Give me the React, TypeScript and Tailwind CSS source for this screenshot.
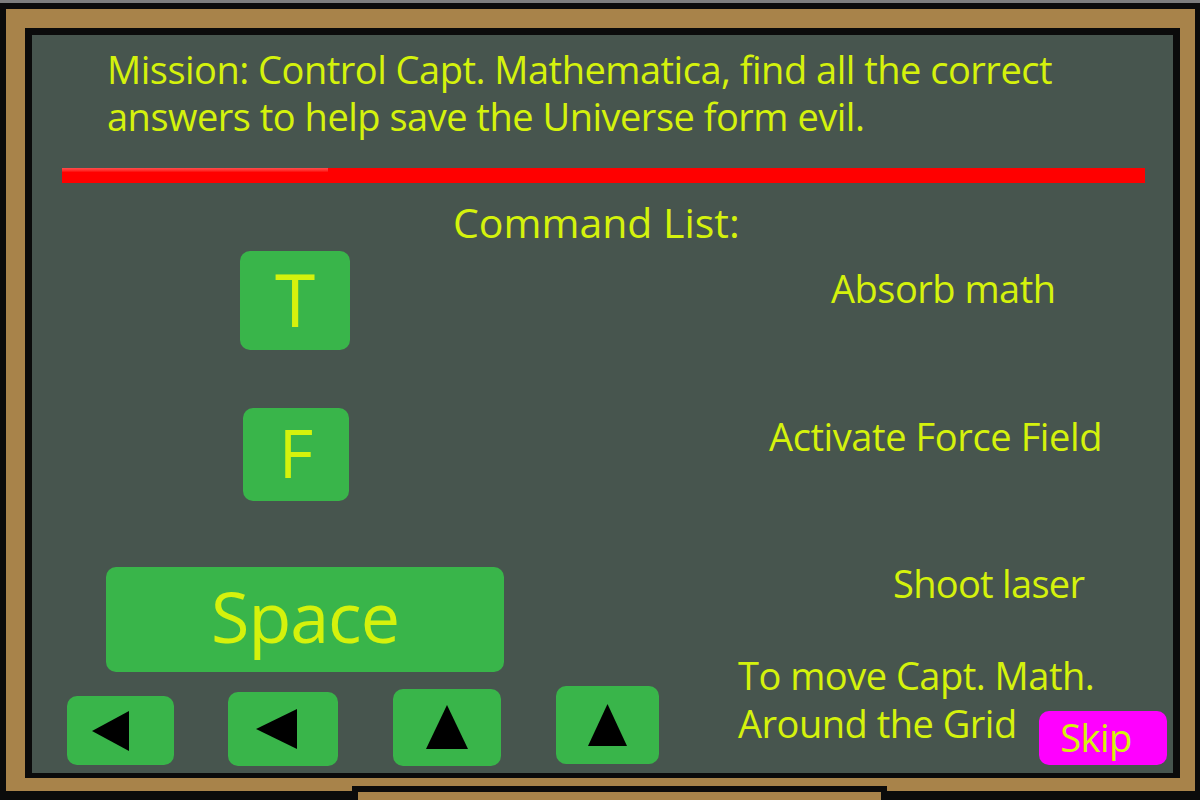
import React from "react";

const Left = ({ w, h }: { w: number; h: number }) => (
  <svg width={w} height={h} viewBox={`0 0 ${w} ${h}`}><polygon points={`0,${h / 2} ${w},0 ${w},${h}`} fill="#000" /></svg>
);
const Up = ({ w, h }: { w: number; h: number }) => (
  <svg width={w} height={h} viewBox={`0 0 ${w} ${h}`}><polygon points={`${w / 2},0 ${w},${h} 0,${h}`} fill="#000" /></svg>
);

export default function App() {
  return (
    <div className="relative w-[1200px] h-[800px] overflow-hidden bg-[#0b0b0b] font-['Open_Sans',sans-serif] text-[#d5f20c]">
      <div className="h-[3px] bg-[#7d7d7d]" />
      <div className="ml-[6px] mr-[5px] mt-[6px] h-[782px] bg-[#a8834a] pt-[19px] pl-[19px] pr-[15px] pb-[13px]">
        <div className="h-full bg-[#0b0b0b] pt-[7px] pl-[7px] pr-[7px] pb-[5px]">
          <div className="h-full bg-[#47554e] flex flex-col">
            {/* mission */}
            <div className="ml-[75px] mt-[11px] text-[38px] leading-[47px] tracking-[-0.5px] whitespace-nowrap">
              <div>Mission: Control Capt. Mathematica, find all the correct</div>
              <div>answers to help save the Universe form evil.</div>
            </div>
            {/* red bar */}
            <div className="ml-[30px] mr-[28px] mt-[28px] h-[15px] bg-[#ff0000]">
              <div className="w-[266px] h-[4px] bg-gradient-to-b from-[#ff4a4a] to-[#ff0000]" />
            </div>
            {/* command list */}
            <div className="mt-[16px] ml-[421px] text-[41px] leading-[47px] whitespace-nowrap">Command List:</div>
            {/* T row */}
            <div className="flex items-start mt-[5px] h-[157px]">
              <div className="ml-[208px] w-[110px] h-[99px] rounded-[10px] bg-[#39b54a] flex items-center justify-center text-[73px] leading-none pb-[4px]">T</div>
              <div className="ml-[481px] mt-[14px] text-[38px] leading-[47px] tracking-[-0.5px] whitespace-nowrap">Absorb math</div>
            </div>
            {/* F row */}
            <div className="flex items-start h-[159px]">
              <div className="ml-[211px] w-[106px] h-[93px] rounded-[10px] bg-[#39b54a] flex items-center justify-center text-[67px] leading-none pb-[4px]">F</div>
              <div className="ml-[420px] mt-[5px] text-[38px] leading-[47px] tracking-[-0.4px] whitespace-nowrap">Activate Force Field</div>
            </div>
            {/* Space row */}
            <div className="flex items-start h-[105px]">
              <div className="ml-[74px] w-[398px] h-[105px] rounded-[10px] bg-[#39b54a] flex items-center justify-center text-[70px] leading-none pb-[8px] tracking-[-1px]">Space</div>
              <div className="ml-[389px] mt-[-7px] text-[38px] leading-[47px] tracking-[-0.7px] whitespace-nowrap">Shoot laser</div>
            </div>
            {/* bottom row */}
            <div className="flex items-start">
              <div className="flex items-end h-[94px]">
                <div className="ml-[35px] mb-[1px] w-[107px] h-[69px] rounded-[10px] bg-[#39b54a] flex items-center justify-center pr-[20px]"><Left w={37} h={40} /></div>
                <div className="ml-[54px] w-[110px] h-[74px] rounded-[10px] bg-[#39b54a] flex items-center justify-center pr-[13px]"><Left w={41} h={40} /></div>
                <div className="ml-[55px] w-[108px] h-[77px] rounded-[10px] bg-[#39b54a] flex items-center justify-center pb-[2px]"><Up w={42} h={44} /></div>
                <div className="ml-[55px] mb-[2px] w-[103px] h-[78px] rounded-[10px] bg-[#39b54a] flex items-center justify-center pb-[1px]"><Up w={39} h={42} /></div>
              </div>
              <div className="ml-[79px] mt-[-21px] w-[301px] text-[38px] leading-[48px] tracking-[-0.5px] whitespace-nowrap">
                <div>To move Capt. Math.</div>
                <div>Around the Grid</div>
              </div>
              <div className="mt-[39px] w-[128px] h-[54px] rounded-[10px] bg-[#ff00ff] flex items-center justify-center text-[38px] leading-none tracking-[-0.5px] pb-[2px] pr-[14px]">Skip</div>
            </div>
          </div>
        </div>
      </div>
      {/* chalk tray notch */}
      <div className="absolute left-[352px] top-[786px] w-[535px] h-[14px] bg-[#0b0b0b] px-[6px] pt-[6px]">
        <div className="h-full bg-[#a8834a]" />
      </div>
    </div>
  );
}
